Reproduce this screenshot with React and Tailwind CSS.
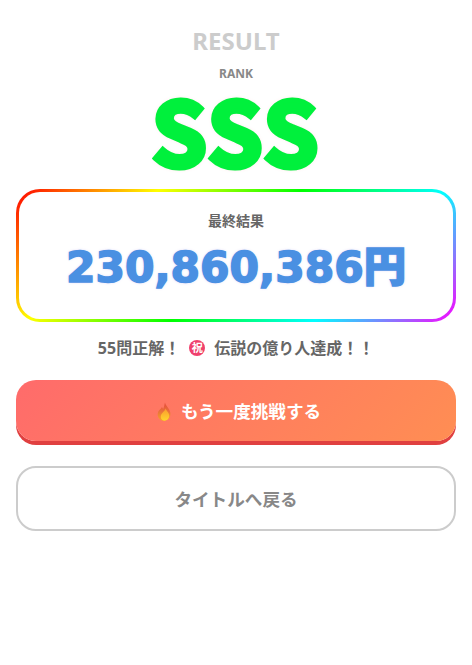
import React from "react";

const FONT = { fontFamily: '"Noto Sans", "Noto Sans CJK JP", sans-serif' };

const FireIcon = () => (
  <svg width="14" height="19" viewBox="0 0 14 19" className="shrink-0">
    <defs>
      <linearGradient id="flame" x1="0.5" y1="0" x2="0.5" y2="1">
        <stop offset="0" stopColor="#e5483a" />
        <stop offset="0.5" stopColor="#e9733a" />
        <stop offset="1" stopColor="#f6a623" />
      </linearGradient>
      <linearGradient id="core" x1="0.5" y1="0" x2="0.5" y2="1">
        <stop offset="0" stopColor="#fb9a2e" />
        <stop offset="1" stopColor="#ffd52e" />
      </linearGradient>
    </defs>
    <path d="M8 0.500C8.300 3.500 12.500 6 13.300 10.500C14 15 11 18.700 7 18.700C3 18.700 0.300 15.500 0.700 11.500C1 8.500 3.500 7.500 5 5C5.500 6 5.800 6.500 6.300 6.800C7 5 7.500 2.500 8 0.500Z" fill="url(#flame)" />
    <path d="M8.500 6.500C9.500 9 12.500 11 12.300 14C12 16.800 10 18.700 7.500 18.700C5 18.700 3.500 16.500 3.800 14C4.300 11 7.500 9.800 8.500 6.500Z" fill="url(#core)" />
  </svg>
);

const App = () => {
  return (
    <div className="w-full min-h-[665px] bg-white px-4 pt-[27px] flex flex-col items-center" style={FONT}>
      <h1 className="text-2xl leading-[28px] font-bold text-[#cccccc]">RESULT</h1>
      <p className="mt-[11px] text-xs leading-[16px] font-bold text-[#888888]">RANK</p>
      <div className="mt-[4px] text-[89px] leading-[85px] tracking-[2px] font-bold text-[#00f03c] [-webkit-text-stroke:5px_#00f03c] [font-family:'Noto_Sans_CJK_JP',sans-serif] [text-shadow:0_0_4px_rgba(255,100,100,0.5)]">
        SSS
      </div>

      <div className="mt-[18px] w-full rounded-3xl p-[3px] bg-[linear-gradient(135deg,#ff0000,#ffff00,#00ff00,#00ffff,#ff00ff)]">
        <div className="rounded-[21px] bg-white h-[127px] flex flex-col items-center pt-[19px]">
          <p className="text-sm leading-[20px] font-bold text-[#666666]">最終結果</p>
          <p className="mt-[11px] text-[42.4px] leading-[52px] font-black text-[#4a90e2] [-webkit-text-stroke:1.5px_#4a90e2] [font-family:'DejaVu_Sans','Noto_Sans_CJK_JP',sans-serif] [text-shadow:0_0_3px_rgba(120,100,230,0.4)]">
            230,860,386円
          </p>
        </div>
      </div>

      <p className="mt-[15px] flex items-center text-base leading-[22px] font-bold text-[#666666]">
        55問正解！
        <span className="mx-[9px] w-4 h-4 rounded-full bg-[#f0406c] text-white text-[11px] leading-[16px] text-center">祝</span>
        伝説の億り人達成！！
      </p>

      <button className="mt-[21px] w-full h-[61px] pl-[6px] pt-px rounded-[20px] flex items-center justify-center gap-[10px] text-white text-[17.6px] font-bold bg-[linear-gradient(135deg,#ff6b6b,#ff8e53)] shadow-[0_4px_0_#e04040]">
        <FireIcon />
        もう一度挑戦する
      </button>

      <button className="mt-[25px] w-full h-[65px] pt-px rounded-[20px] border-2 border-[#cccccc] bg-white text-[#888888] text-[17.6px] font-bold">
        タイトルへ戻る
      </button>
    </div>
  );
};

export default App;
